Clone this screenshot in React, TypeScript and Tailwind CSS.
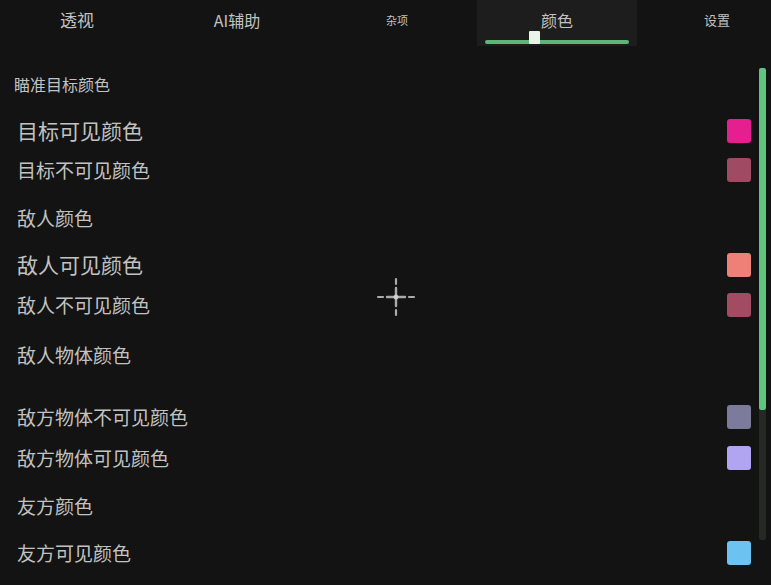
import React from 'react';

const tabs = [
  { label: '透视', size: 'text-[17px]' },
  { label: 'AI辅助', size: 'text-[16px]' },
  { label: '杂项', size: 'text-[11px]' },
  { label: '颜色', size: 'text-[16px]', active: true },
  { label: '设置', size: 'text-[13px]' },
];

type Row = { label: string; size: string; mt: string; color?: string };

const rows: Row[] = [
  { label: '目标可见颜色', size: 'text-[21px]', mt: 'mt-[11px]', color: '#e51f8f' },
  { label: '目标不可见颜色', size: 'text-[19px]', mt: 'mt-[3px]', color: '#a04a64' },
  { label: '敌人颜色', size: 'text-[19px]', mt: 'mt-[12px]' },
  { label: '敌人可见颜色', size: 'text-[21px]', mt: 'mt-[11px]', color: '#ef8078' },
  { label: '敌人不可见颜色', size: 'text-[19px]', mt: 'mt-[4px]', color: '#a24b63' },
  { label: '敌人物体颜色', size: 'text-[19px]', mt: 'mt-[14px]' },
  { label: '敌方物体不可见颜色', size: 'text-[19px]', mt: 'mt-[26px]', color: '#7c7b9c' },
  { label: '敌方物体可见颜色', size: 'text-[19px]', mt: 'mt-[5px]', color: '#b1a5f2' },
  { label: '友方颜色', size: 'text-[19px]', mt: 'mt-[12px]' },
  { label: '友方可见颜色', size: 'text-[19px]', mt: 'mt-[11px]', color: '#6cc2f1' },
];

function Crosshair() {
  return (
    <svg className="absolute left-[375px] top-[276px]" width="42" height="42" viewBox="0 0 42 42">
      <g stroke="#d0d0d0" strokeLinecap="round" opacity="0.8">
        <line x1="21" y1="3" x2="21" y2="8" strokeWidth="2.2" />
        <line x1="21" y1="34" x2="21" y2="39" strokeWidth="2.2" />
        <line x1="3" y1="21" x2="8" y2="21" strokeWidth="2.2" />
        <line x1="34" y1="21" x2="39" y2="21" strokeWidth="2.2" />
        <line x1="21" y1="12" x2="21" y2="30" strokeWidth="2.4" />
        <line x1="12" y1="21" x2="30" y2="21" strokeWidth="2.4" />
      </g>
      <circle cx="21" cy="21" r="2.5" fill="#e0e0e0" opacity="0.7" />
    </svg>
  );
}

export default function App() {
  return (
    <div
      className="relative w-[771px] h-[585px] overflow-hidden bg-[#121312] text-[#c2c2c2]"
      style={{ fontFamily: '"Noto Sans CJK SC", "Noto Sans", sans-serif' }}
    >
      {/* Tab bar */}
      <div className="flex h-[50px] ml-[-3px]">
        {tabs.map((t) => (
          <div
            key={t.label}
            className={`relative w-[160px] shrink-0 h-[46px] flex justify-center pt-[7px] ${t.size} ${
              t.active ? 'bg-[#1c1d1c]' : ''
            }`}
          >
            <span className="leading-[26px]">{t.label}</span>
            {t.active && (
              <div className="absolute left-[8px] right-[8px] top-[40px] h-[4px] bg-[#5fb575] rounded-sm">
                <div className="absolute left-[44px] top-[-9px] w-[11px] h-[13px] bg-[#e8f3ec] rounded-[1px]" />
              </div>
            )}
          </div>
        ))}
      </div>

      <div className="flex">
        {/* List */}
        <div className="flex-1 flex flex-col pr-[8px]">
          <div className="mt-[16px] h-[36px] flex items-center pl-[14px] text-[16px]">瞄准目标颜色</div>
          {rows.map((r) => (
            <div key={r.label} className={`${r.mt} h-[36px] flex items-center justify-between pl-[17px]`}>
              <span className={r.size}>{r.label}</span>
              {r.color && (
                <div className="w-[24px] h-[24px] rounded-[3px]" style={{ backgroundColor: r.color }} />
              )}
            </div>
          ))}
        </div>

        {/* Scrollbar */}
        <div className="w-[7px] mr-[5px] mt-[18px] flex flex-col">
          <div className="h-[342px] bg-[#5ec47e] rounded-[2px]" />
          <div className="h-[130px] bg-[#262826] rounded-b-[2px]" />
        </div>
      </div>

      <Crosshair />
    </div>
  );
}
